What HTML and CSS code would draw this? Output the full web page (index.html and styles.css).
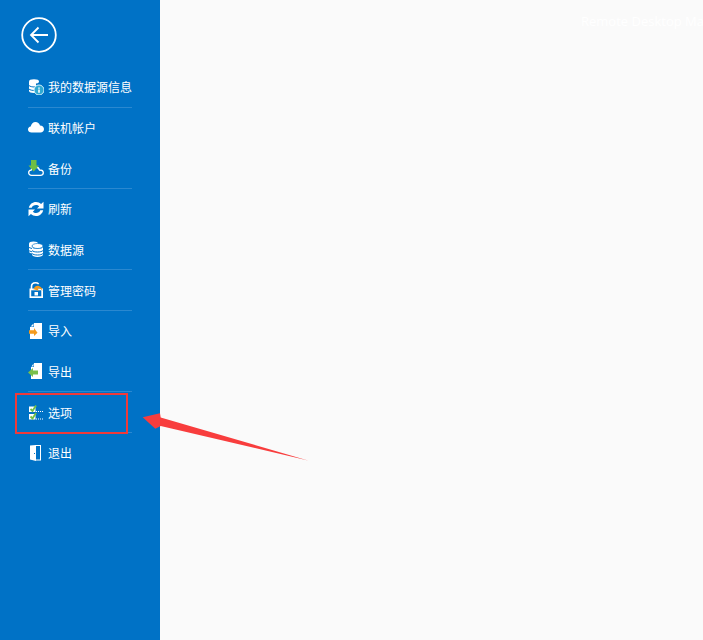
FILE: index.html
```html
<!DOCTYPE html>
<html lang="zh-CN">
<head>
    <meta charset="UTF-8">
    <title>Remote Desktop Manager</title>
    <link rel="stylesheet" href="styles.css">
</head>
<body>
    <div class="app">
        <!-- 左侧菜单 -->
        <nav class="sidebar">
            <div class="back">
                <svg width="36" height="36" viewBox="0 0 36 36" fill="none" stroke="#fff">
                    <circle cx="18" cy="18" r="16.8" stroke-width="1.8"/>
                    <path d="M10 18H27M17.5 10.5L10 18l7.500 7.500" stroke-width="1.8"/>
                </svg>
            </div>
            <ul class="menu">
                <li class="item line">
                    <svg class="icon" viewBox="0 0 16 16">
                        <ellipse cx="6" cy="2.500" rx="5" ry="2.200" fill="#fff"/>
                        <path d="M1 3v9c0 1 2 2 5 2h2V3z" fill="#fff"/>
                        <path d="M1 6.500c1 1 3 1.500 6 1.500M1 10c1 1 3 1.500 6 1.500" stroke="#0072c6" fill="none"/>
                        <circle cx="11" cy="11" r="5" fill="#2fa9d2" stroke="#d8f2fa"/>
                        <path d="M10.200 8.500h1.600v1.300h-1.600zM10.200 10.500h1.600v3.300h-1.600z" fill="#fff"/>
                    </svg>
                    <span>我的数据源信息</span>
                </li>
                <li class="item">
                    <svg class="icon" viewBox="0 0 16 16">
                        <path d="M3.500 13.500C1.500 13.500 0 12.200 0 10.400 0 8.800 1.200 7.600 2.700 7.500 3.300 5 5.100 3 7.500 3c2.200 0 3.900 1.500 4.500 3.500 2.300 0 4 1.600 4 3.500 0 2-1.500 3.500-3.500 3.500z" fill="#fff"/>
                    </svg>
                    <span>联机帐户</span>
                </li>
                <li class="item line">
                    <svg class="icon" viewBox="0 0 16 16">
                        <path d="M3.500 15.300C1.800 15.300.7 14.200.7 12.700c0-1.300 1-2.400 2.400-2.500C3.600 8.500 5 7 7.500 7c2 0 3.500 1.300 4 3 2.200 0 3.800 1.100 3.800 2.800 0 1.500-1.200 2.500-2.900 2.500z" fill="#0072c6" stroke="#fff" stroke-width="1.300"/>
                        <path d="M3 0h5.500v5.500H11L5.700 11.500.5 5.500H3z" fill="#6fbf44"/>
                    </svg>
                    <span>备份</span>
                </li>
                <li class="item">
                    <svg class="icon" viewBox="0 0 16 16" fill="#fff">
                        <path d="M.8 6.800C1.600 3.300 4.500 1 8 1c2 0 3.800.8 5.100 2L15.500.8V7.500H9l2.200-2.200C10.300 4.500 9.200 4 8 4 6 4 4.300 5 3.700 6.800z"/>
                        <path d="M15.200 9.200C14.400 12.700 11.500 15 8 15c-2 0-3.800-.8-5.100-2L.5 15.200V8.500H7l-2.200 2.200c.9.800 2 1.300 3.200 1.300 2 0 3.700-1 4.300-2.800z"/>
                    </svg>
                    <span>刷新</span>
                </li>
                <li class="item line">
                    <svg class="icon" viewBox="0 0 16 16">
                        <ellipse cx="5.500" cy="2.500" rx="4.500" ry="2" fill="#fff"/>
                        <path d="M1 3v7.500c0 1 1.500 2 3.500 2V3z" fill="#fff"/>
                        <path d="M1 6.500l3.500 1.200M1 9.800l3.500 1.200" stroke="#0072c6" fill="none"/>
                        <ellipse cx="9.500" cy="5" rx="5.500" ry="2.500" fill="#fff" stroke="#0072c6" stroke-width=".7"/>
                        <path d="M4 6v7.800C4 15 6.500 16 9.500 16s5.500-1 5.500-2.200V6c0 1.300-2.500 2-5.500 2S4 7.300 4 6z" fill="#fff"/>
                        <path d="M4 9.500c1 1 3 1.500 5.500 1.500S14 10.500 15 9.500M4 12.500c1 1 3 1.500 5.500 1.500S14 13.500 15 12.500" stroke="#0072c6" fill="none"/>
                    </svg>
                    <span>数据源</span>
                </li>
                <li class="item line">
                    <svg class="icon" viewBox="0 0 16 16">
                        <path d="M3.500 7V4.500C3.500 2 5.500.8 7.500.8c1.300 0 2.400.4 3.200 1.200" fill="none" stroke="#fff" stroke-width="1.600"/>
                        <path d="M1.500 6.500h13.500V16H1.500z" fill="#fff"/>
                        <path d="M3.200 8.300h10.100v6H3.200z" fill="#0072c6"/>
                        <path d="M6.500 10h3.500v3.500H6.500z" fill="#fff"/>
                        <path d="M5.500 7.500C6 4.800 8.500 3.300 10.800 4c2.200.6 3.700 2.500 3.700 5-1-1.700-2.500-2.700-4.500-2.700L10.500 8.800 5 7z" fill="#f39a1e"/>
                    </svg>
                    <span>管理密码</span>
                </li>
                <li class="item">
                    <svg class="icon" viewBox="0 0 16 16">
                        <path d="M6 0h8v16H2V4h4zM2.500 3.500L5.500.5v3z" fill="#fff"/>
                        <path d="M1 6.800h5V4.500l3.500 4.800L6 12.500v-2.200H1z" fill="#f39a1e" transform="translate(0 .5)"/>
                    </svg>
                    <span>导入</span>
                </li>
                <li class="item line">
                    <svg class="icon" viewBox="0 0 16 16">
                        <path d="M6 0h8v16H3V4h3zM3.500 3.500L5.500.5v3z" fill="#fff"/>
                        <path d="M0 9.500l5-4.500v2.500h5v4H5V14z" fill="#78bf4b"/>
                    </svg>
                    <span>导出</span>
                </li>
                <li class="item line">
                    <svg class="icon" viewBox="0 0 16 16">
                        <path d="M1 2.500h6.500v5.500H1zM1 10h6.500v5.500H1z" fill="#fff"/>
                        <path d="M2.500 5l2 2L8 1.500M2.500 12.500l2 2L8 9" fill="none" stroke="#6fbf44" stroke-width="1.800"/>
                        <path d="M8 7.500h7M8 15h7" stroke="#fff" stroke-dasharray="1 1"/>
                    </svg>
                    <span>选项</span>
                    <i class="mark"></i>
                </li>
                <li class="item">
                    <svg class="icon" viewBox="0 0 16 16">
                        <path d="M7 0h6v15.500H8v-1h4V1H7z" fill="#fff"/>
                        <path d="M2 .5L8 0v16l-6-1.500z" fill="#fff"/>
                        <path d="M6 8h1v1H6z" fill="#0072c6"/>
                    </svg>
                    <span>退出</span>
                </li>
            </ul>
        </nav>
        <main class="content">
            <div class="title">Remote Desktop Manager</div>
        </main>
        <!-- 标注箭头 -->
        <svg class="pointer" width="170" height="55" viewBox="140 410 170 55">
            <path d="M142.700 417.300L160 413.300 160.700 417.500 308 460.500 160.700 426 155.300 428.700z" fill="#f83d3d"/>
        </svg>
    </div>
</body>
</html>
```

FILE: styles.css
```css
* {
    box-sizing: border-box;
}

html,
body {
    margin: 0;
    padding: 0;
    height: 100%;
    overflow: hidden;
}

body {
    font-family: "Noto Sans CJK SC", "Liberation Sans", sans-serif;
    font-size: 12px;
    color: #fff;
}

.app {
    position: relative;
    display: flex;
    height: 100%;
}

.sidebar {
    flex: 0 0 160px;
    background: #0072c6;
    padding: 17px 28px 0 21px;
}

.back {
    height: 36px;
    margin-bottom: 14px;
}

.back svg {
    display: block;
}

.menu {
    list-style: none;
    margin: 0 0 0 7px;
    padding: 0;
    width: 104px;
}

.item {
    position: relative;
    display: flex;
    align-items: center;
    gap: 4px;
    height: 40.67px;
    border-bottom: 1px solid transparent;
    white-space: nowrap;
}

.item.line {
    border-bottom-color: #2a88d0;
}

.icon {
    flex: none;
    width: 16px;
    height: 16px;
}

/* 选项 的红框 */
.mark {
    position: absolute;
    left: -13px;
    top: 1px;
    width: 113px;
    height: 41px;
    border: 2px solid #f03a3a;
}

.content {
    flex: 1;
    min-width: 0;
    background: #fafafa;
    overflow: hidden;
}

.title {
    padding: 13px 0 0 421px;
    font-family: "Open Sans", "Liberation Sans", sans-serif;
    font-size: 13px;
    line-height: 16px;
    color: #fff;
    white-space: nowrap;
}

.pointer {
    position: absolute;
    left: 140px;
    top: 410px;
}
```
